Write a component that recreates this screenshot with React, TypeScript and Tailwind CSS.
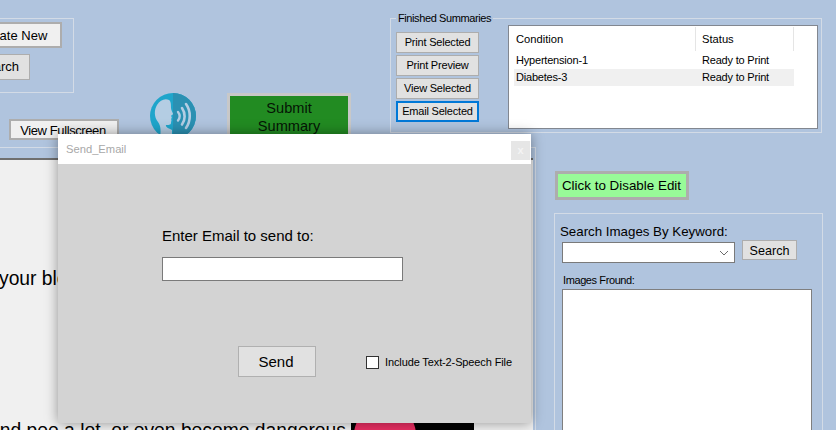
function SpeechIcon() {
  return (
    <svg width="46" height="46" viewBox="0 0 46 46" className="block">
      <circle cx="23" cy="23" r="23" fill="#1fa5cb" />
      <path d="M23 0A23 23 0 0 1 23 46Z" fill="#2b90b2" />
      <path
        d="M10 46C11 38 11 33 8 29C4 24 4 17 7 12C10 7 15 5 19 7C21 8 21 12 21 15C21 17 23 20 23 21C23 22 21 22 21 23C22 24 22 25 21 26C22 27 21 28 21 30C21 32 18 32 16 32C15 34 20 36 22 37L22 46Z"
        fill="#b4cde3"
      />
      <g fill="none" stroke="#b4cde3" strokeLinecap="round">
        <path d="M28 19C30 21.5 30 25 28 27.5" strokeWidth="2.4" />
        <path d="M32 15C35.5 20 35.5 27 32 31.5" strokeWidth="2.6" />
        <path d="M36 11C41 18 41 28 36 35" strokeWidth="2.6" />
      </g>
    </svg>
  );
}

function SmallButton({ label, focused }: { label: string; focused?: boolean }) {
  return (
    <button
      className={
        focused
          ? "block h-[21px] w-[83px] whitespace-nowrap border-2 border-[#0078d7] bg-[#e1e1e1] text-center text-[11px] leading-[17px] tracking-[-0.2px] text-black"
          : "block h-[21px] w-[83px] whitespace-nowrap border border-[#adadad] bg-[#e1e1e1] text-center text-[11px] leading-[19px] tracking-[-0.2px] text-black"
      }
    >
      {label}
    </button>
  );
}

export default function App() {
  return (
    <div className="relative flex h-[430px] w-[836px] flex-col overflow-hidden bg-[#b0c4de] font-['Liberation_Sans',Arial,sans-serif] text-black">
      {/* top band */}
      <div className="flex h-[147px] shrink-0 items-start">
        <div className="w-[130px] shrink-0">
          <div className="ml-[-46px] mt-[18px] h-[75px] w-[120px] border border-[#d3dbe6] pl-[9px] pt-[3px]">
            <button className="block h-[26px] w-[98px] border-2 border-[#adadad] bg-[#f0f0f0] text-[13px] leading-[24px]">
              Create New
            </button>
            <button className="ml-[3px] mt-[6px] block h-[26px] w-[63px] border border-[#adadad] bg-[#e1e1e1] text-[13px] leading-[24px]">
              Search
            </button>
          </div>
          <button className="ml-[9px] mt-[26px] block h-[21px] w-[110px] border-2 border-[#adadad] bg-[#f0f0f0] pr-[2px] text-[13px] leading-[19px] tracking-[-0.4px]">
            View Fullscreen
          </button>
        </div>
        <div className="ml-[20px] mt-[93px] shrink-0">
          <SpeechIcon />
        </div>
        <button className="ml-[31px] mt-[93px] h-[48px] w-[124px] shrink-0 border-[3px] border-[#c8c8c8] bg-[#228b22] text-center text-[14.6px] leading-[18px] text-[#051505]">
          Submit
          <br />
          Summary
        </button>
        <fieldset className="ml-[39px] mt-[12px] h-[121px] w-[432px] shrink-0 border border-[#d3dbe6] pl-[5px]">
          <legend className="px-[2px] text-[11px] leading-[12px] tracking-[-0.4px]">Finished Summaries</legend>
          <div className="flex items-start">
            <div className="mt-[8px] flex flex-col gap-[2px]">
              <SmallButton label="Print Selected" />
              <SmallButton label="Print Preview" />
              <SmallButton label="View Selected" />
              <SmallButton focused label="Email Selected" />
            </div>
            <div className="ml-[29px] mt-[1px] h-[104px] w-[310px] border border-[#828790] bg-white pl-[5px] pt-[1px] text-[11px] tracking-[-0.2px]">
              <div className="flex h-[24px] w-[280px] text-[11.2px] leading-[24px] tracking-[0px]">
                <div className="h-full w-[182px] border-r border-[#e5e5e5] pl-[2px]">Condition</div>
                <div className="h-full w-[98px] border-r border-[#e5e5e5] pl-[6px]">Status</div>
              </div>
              <div className="mt-[1px] flex h-[17px] w-[280px] leading-[17px]">
                <div className="w-[188px] pl-[2px]">Hypertension-1</div>
                <div>Ready to Print</div>
              </div>
              <div className="flex h-[17px] w-[280px] bg-[#f0f0f0] leading-[17px]">
                <div className="w-[188px] pl-[2px]">Diabetes-3</div>
                <div>Ready to Print</div>
              </div>
            </div>
          </div>
        </fieldset>
      </div>

      {/* lower area */}
      <div className="flex min-h-0 flex-1">
        <div className="h-[300px] w-[536px] shrink-0 border-r border-t border-[#d3dbe6] pt-[10px]">
          <div className="h-[300px] w-[533px] overflow-hidden border-t-2 border-[#6f6f6f] bg-[#f0f0f0] text-[19.3px] leading-[22px]">
            <p className="ml-[-1px] mt-[108px] whitespace-nowrap">your blood</p>
            <div className="mt-[130px] flex items-start">
              <p className="ml-[-11px] w-[362px] shrink-0 whitespace-nowrap">and pee a lot, or even become dangerous</p>
              <div className="h-[80px] w-[123px] shrink-0 overflow-hidden bg-black pl-[3px]">
                <div className="mt-[-16px] h-[62px] w-[62px] rounded-full bg-[#e82e62]" />
              </div>
            </div>
          </div>
        </div>
        <div className="pl-[18px] pt-[24px]">
          <button className="ml-[1px] block h-[29px] w-[134px] border-[3px] border-[#adadad] bg-[#98fb98] pr-[1px] text-center text-[13.4px] leading-[23px]">
            Click to Disable Edit
          </button>
          <div className="mt-[13px] h-[300px] w-[269px] border border-[#d3dbe6] pl-[5px] pt-[10px]">
            <div className="text-[13.3px] leading-[16px]">Search Images By Keyword:</div>
            <div className="flex items-start">
              <div className="ml-[2px] mt-[2px] flex h-[21px] w-[173px] items-center justify-end border border-[#7a7a7a] bg-white pr-[5px]">
                <svg width="10" height="6" viewBox="0 0 10 6" fill="none" stroke="#6b6b6b" strokeWidth="1">
                  <path d="M1 1L5 5L9 1" />
                </svg>
              </div>
              <button className="ml-[7px] h-[20px] w-[55px] border border-[#adadad] bg-[#e1e1e1] text-[12.6px] leading-[20px]">
                Search
              </button>
            </div>
            <div className="ml-[3px] mt-[10px] text-[11px] leading-[14px] tracking-[-0.4px]">Images Fround:</div>
            <div className="ml-[2px] mt-[2px] h-[200px] w-[250px] border border-[#7f7f7f] bg-white" />
          </div>
        </div>
      </div>

      {/* modal dialog */}
      <div className="absolute left-[58px] top-[134px] h-[289px] w-[473px] bg-[#d3d3d3] shadow-[0_0_12px_rgba(0,0,0,0.4)]">
        <div className="flex h-[30px] items-start justify-between bg-white pl-[8px] pr-[1px]">
          <span className="mt-[8px] text-[11.2px] leading-[14px] text-[#a8a8a8]">Send_Email</span>
          <span className="mt-[7px] flex h-[19px] w-[19px] items-center justify-center bg-[#e6e6e6] text-[11px] font-bold leading-none text-[#f4f4f4]">
            x
          </span>
        </div>
        <div className="pl-[104px] pt-[63px]">
          <div className="text-[15px] leading-[18px]">Enter Email to send to:</div>
          <div className="mt-[12px] h-[24px] w-[241px] border border-[#7a7a7a] bg-white" />
          <div className="mt-[65px] flex items-start">
            <button className="ml-[76px] h-[31px] w-[78px] border border-[#b0b0b0] bg-[#e1e1e1] pr-[2px] text-[15px] leading-[29px]">
              Send
            </button>
            <div className="ml-[50px] mt-[10px] flex items-center">
              <span className="block h-[13px] w-[13px] border border-[#333] bg-white" />
              <span className="ml-[6px] whitespace-nowrap text-[11px] leading-[13px] tracking-[-0.12px]">Include Text-2-Speech File</span>
            </div>
          </div>
        </div>
      </div>
    </div>
  );
}
